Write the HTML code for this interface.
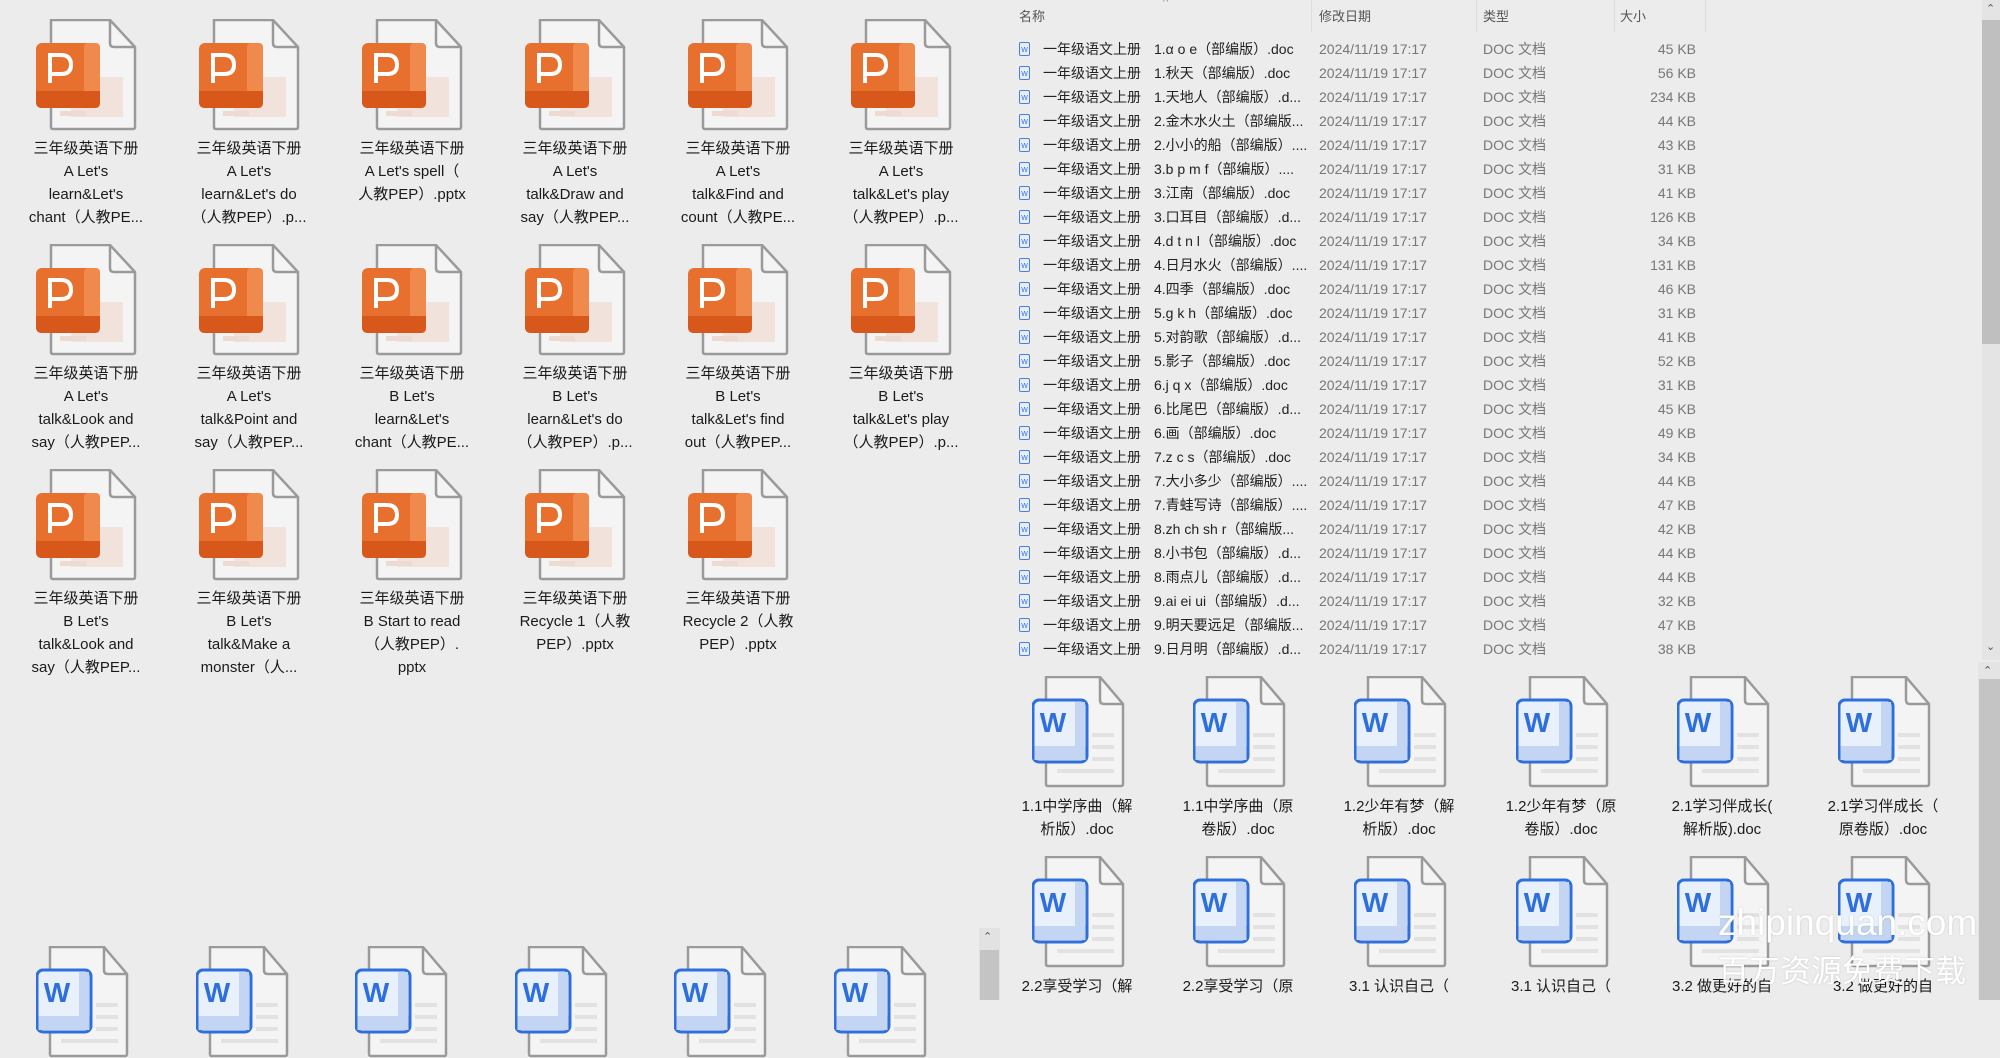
<!DOCTYPE html>
<html><head><meta charset="utf-8">
<style>
*{margin:0;padding:0;box-sizing:border-box}
body{width:2000px;height:1000px;overflow:hidden;background:#ececec;position:relative;font-family:"Liberation Sans","Noto Sans CJK SC",sans-serif;color:#1a1a1a}
.ic{position:absolute;width:110px;height:112px}
.t{position:absolute;width:150px;text-align:center;font-size:15px;line-height:23px;color:#1a1a1a;white-space:nowrap}
.hd{position:absolute;top:6px;font-size:13px;color:#555}
.sep{position:absolute;top:0;width:1px;height:32px;background:#dcdcdc}
.r{position:absolute;left:1000px;width:980px;height:24px;font-size:14px;line-height:24px}
.r span{position:absolute;white-space:nowrap}
.r .a{left:43px;color:#222}.r .b{left:154px;color:#222}.r .c{left:319px;color:#777}.r .d{left:483px;color:#777}.r .e{right:284px;color:#777}
.r svg{position:absolute;left:19px;top:5px}
.wm{position:absolute;color:#fff;white-space:nowrap;text-shadow:0 0 2px rgba(0,0,0,.15)}
</style></head><body>
<svg width="0" height="0" style="position:absolute">
<defs>
<symbol id="ppt" viewBox="0 0 110 112">
<path d="M15 1 H74 L99 28 V108 Q99 110 97 110 H17 Q15 110 15 108 Z" fill="#f4f4f4" stroke="#9a9a9a" stroke-width="2.5"/>
<path d="M74 1 V24 Q74 28 78 28 H99" fill="none" stroke="#9a9a9a" stroke-width="2.5"/>
<rect x="35" y="58" width="52" height="40" fill="#f1e2dc"/>
<rect x="24" y="92" width="26" height="5" fill="#ecdad3"/>
<rect x="0" y="24" width="64" height="65" rx="6" fill="#e8702f"/>
<rect x="48" y="24" width="16" height="65" rx="4" fill="#f08a4c"/>
<path d="M0 72 H64 V83 Q64 89 58 89 H6 Q0 89 0 83 Z" fill="#d8581b"/>
<path d="M14 64 V36 H25 Q35 36 35 46 Q35 55 25 55 H14" fill="none" stroke="#fff" stroke-width="4"/>
</symbol>
<symbol id="doc" viewBox="0 0 110 112">
<path d="M14 1 H68 L91 28 V108 Q91 110 89 110 H16 Q14 110 14 108 Z" fill="#f4f4f4" stroke="#9a9a9a" stroke-width="2.5"/>
<path d="M68 1 V24 Q68 28 72 28 H91" fill="none" stroke="#9a9a9a" stroke-width="2.5"/>
<rect x="60" y="57" width="22" height="4" fill="#e2e2e2"/>
<rect x="60" y="69" width="22" height="4" fill="#e2e2e2"/>
<rect x="60" y="81" width="22" height="4" fill="#e2e2e2"/>
<rect x="25" y="93" width="57" height="4" fill="#e2e2e2"/>
<rect x="1" y="24" width="54" height="62" rx="6" fill="#e8f0fb" stroke="#2f6fdc" stroke-width="3"/>
<rect x="43" y="26" width="10" height="58" fill="#c3d5f2"/>
<rect x="2.5" y="70" width="51" height="14" fill="#c3d5f2"/>
<text x="21" y="56" text-anchor="middle" font-family="Liberation Sans" font-weight="bold" font-size="28" fill="#2f6fdc">W</text>
</symbol>
<symbol id="sm" viewBox="0 0 11 14">
<rect x="0.5" y="0.5" width="10" height="13" rx="1.5" fill="#e6eefb" stroke="#4a7fd6"/>
<text x="5.5" y="10" text-anchor="middle" font-size="7" font-family="Liberation Sans" fill="#2f6fdc">W</text>
</symbol>
</defs></svg>

<!-- LEFT PPT GRID -->
<svg class="ic" style="left:36px;top:19px"><use href="#ppt"/></svg>
<svg class="ic" style="left:199px;top:19px"><use href="#ppt"/></svg>
<svg class="ic" style="left:362px;top:19px"><use href="#ppt"/></svg>
<svg class="ic" style="left:525px;top:19px"><use href="#ppt"/></svg>
<svg class="ic" style="left:688px;top:19px"><use href="#ppt"/></svg>
<svg class="ic" style="left:851px;top:19px"><use href="#ppt"/></svg>
<div class="t" style="left:11px;top:137px">三年级英语下册<br>A Let's<br>learn&amp;Let's<br>chant（人教PE...</div>
<div class="t" style="left:174px;top:137px">三年级英语下册<br>A Let's<br>learn&amp;Let's do<br>（人教PEP）.p...</div>
<div class="t" style="left:337px;top:137px">三年级英语下册<br>A Let's spell（<br>人教PEP）.pptx</div>
<div class="t" style="left:500px;top:137px">三年级英语下册<br>A Let's<br>talk&amp;Draw and<br>say（人教PEP...</div>
<div class="t" style="left:663px;top:137px">三年级英语下册<br>A Let's<br>talk&amp;Find and<br>count（人教PE...</div>
<div class="t" style="left:826px;top:137px">三年级英语下册<br>A Let's<br>talk&amp;Let's play<br>（人教PEP）.p...</div>

<svg class="ic" style="left:36px;top:244px"><use href="#ppt"/></svg>
<svg class="ic" style="left:199px;top:244px"><use href="#ppt"/></svg>
<svg class="ic" style="left:362px;top:244px"><use href="#ppt"/></svg>
<svg class="ic" style="left:525px;top:244px"><use href="#ppt"/></svg>
<svg class="ic" style="left:688px;top:244px"><use href="#ppt"/></svg>
<svg class="ic" style="left:851px;top:244px"><use href="#ppt"/></svg>
<div class="t" style="left:11px;top:362px">三年级英语下册<br>A Let's<br>talk&amp;Look and<br>say（人教PEP...</div>
<div class="t" style="left:174px;top:362px">三年级英语下册<br>A Let's<br>talk&amp;Point and<br>say（人教PEP...</div>
<div class="t" style="left:337px;top:362px">三年级英语下册<br>B Let's<br>learn&amp;Let's<br>chant（人教PE...</div>
<div class="t" style="left:500px;top:362px">三年级英语下册<br>B Let's<br>learn&amp;Let's do<br>（人教PEP）.p...</div>
<div class="t" style="left:663px;top:362px">三年级英语下册<br>B Let's<br>talk&amp;Let's find<br>out（人教PEP...</div>
<div class="t" style="left:826px;top:362px">三年级英语下册<br>B Let's<br>talk&amp;Let's play<br>（人教PEP）.p...</div>

<svg class="ic" style="left:36px;top:469px"><use href="#ppt"/></svg>
<svg class="ic" style="left:199px;top:469px"><use href="#ppt"/></svg>
<svg class="ic" style="left:362px;top:469px"><use href="#ppt"/></svg>
<svg class="ic" style="left:525px;top:469px"><use href="#ppt"/></svg>
<svg class="ic" style="left:688px;top:469px"><use href="#ppt"/></svg>
<div class="t" style="left:11px;top:587px">三年级英语下册<br>B Let's<br>talk&amp;Look and<br>say（人教PEP...</div>
<div class="t" style="left:174px;top:587px">三年级英语下册<br>B Let's<br>talk&amp;Make a<br>monster（人...</div>
<div class="t" style="left:337px;top:587px">三年级英语下册<br>B Start to read<br>（人教PEP）.<br>pptx</div>
<div class="t" style="left:500px;top:587px">三年级英语下册<br>Recycle 1（人教<br>PEP）.pptx</div>
<div class="t" style="left:663px;top:587px">三年级英语下册<br>Recycle 2（人教<br>PEP）.pptx</div>

<svg class="ic" style="left:36px;top:946px"><use href="#doc"/></svg>
<svg class="ic" style="left:196px;top:946px"><use href="#doc"/></svg>
<svg class="ic" style="left:355px;top:946px"><use href="#doc"/></svg>
<svg class="ic" style="left:515px;top:946px"><use href="#doc"/></svg>
<svg class="ic" style="left:674px;top:946px"><use href="#doc"/></svg>
<svg class="ic" style="left:834px;top:946px"><use href="#doc"/></svg>
<!-- left bottom scrollbar -->
<div style="position:absolute;left:979px;top:928px;width:21px;height:72px;background:#e2e2e2"></div>
<div style="position:absolute;left:983px;top:930px;font-size:11px;color:#555">&#8963;</div>
<div style="position:absolute;left:980px;top:950px;width:19px;height:50px;background:#c4c4c4"></div>

<!-- RIGHT LIST -->
<div class="hd" style="left:1019px">名称</div>
<div class="hd" style="left:1163px;top:-4px;font-size:11px;color:#888">^</div>
<div class="hd" style="left:1319px">修改日期</div>
<div class="hd" style="left:1483px">类型</div>
<div class="hd" style="left:1620px">大小</div>
<div class="sep" style="left:1311px"></div><div class="sep" style="left:1476px"></div><div class="sep" style="left:1614px"></div><div class="sep" style="left:1705px"></div>

<div class="r" style="top:37px"><svg width="11" height="14"><use href="#sm"/></svg><span class="a">一年级语文上册</span><span class="b">1.α o e（部编版）.doc</span><span class="c">2024/11/19 17:17</span><span class="d">DOC 文档</span><span class="e">45 KB</span></div>
<div class="r" style="top:61px"><svg width="11" height="14"><use href="#sm"/></svg><span class="a">一年级语文上册</span><span class="b">1.秋天（部编版）.doc</span><span class="c">2024/11/19 17:17</span><span class="d">DOC 文档</span><span class="e">56 KB</span></div>
<div class="r" style="top:85px"><svg width="11" height="14"><use href="#sm"/></svg><span class="a">一年级语文上册</span><span class="b">1.天地人（部编版）.d...</span><span class="c">2024/11/19 17:17</span><span class="d">DOC 文档</span><span class="e">234 KB</span></div>
<div class="r" style="top:109px"><svg width="11" height="14"><use href="#sm"/></svg><span class="a">一年级语文上册</span><span class="b">2.金木水火土（部编版...</span><span class="c">2024/11/19 17:17</span><span class="d">DOC 文档</span><span class="e">44 KB</span></div>
<div class="r" style="top:133px"><svg width="11" height="14"><use href="#sm"/></svg><span class="a">一年级语文上册</span><span class="b">2.小小的船（部编版）....</span><span class="c">2024/11/19 17:17</span><span class="d">DOC 文档</span><span class="e">43 KB</span></div>
<div class="r" style="top:157px"><svg width="11" height="14"><use href="#sm"/></svg><span class="a">一年级语文上册</span><span class="b">3.b p m f（部编版）....</span><span class="c">2024/11/19 17:17</span><span class="d">DOC 文档</span><span class="e">31 KB</span></div>
<div class="r" style="top:181px"><svg width="11" height="14"><use href="#sm"/></svg><span class="a">一年级语文上册</span><span class="b">3.江南（部编版）.doc</span><span class="c">2024/11/19 17:17</span><span class="d">DOC 文档</span><span class="e">41 KB</span></div>
<div class="r" style="top:205px"><svg width="11" height="14"><use href="#sm"/></svg><span class="a">一年级语文上册</span><span class="b">3.口耳目（部编版）.d...</span><span class="c">2024/11/19 17:17</span><span class="d">DOC 文档</span><span class="e">126 KB</span></div>
<div class="r" style="top:229px"><svg width="11" height="14"><use href="#sm"/></svg><span class="a">一年级语文上册</span><span class="b">4.d t n l（部编版）.doc</span><span class="c">2024/11/19 17:17</span><span class="d">DOC 文档</span><span class="e">34 KB</span></div>
<div class="r" style="top:253px"><svg width="11" height="14"><use href="#sm"/></svg><span class="a">一年级语文上册</span><span class="b">4.日月水火（部编版）....</span><span class="c">2024/11/19 17:17</span><span class="d">DOC 文档</span><span class="e">131 KB</span></div>
<div class="r" style="top:277px"><svg width="11" height="14"><use href="#sm"/></svg><span class="a">一年级语文上册</span><span class="b">4.四季（部编版）.doc</span><span class="c">2024/11/19 17:17</span><span class="d">DOC 文档</span><span class="e">46 KB</span></div>
<div class="r" style="top:301px"><svg width="11" height="14"><use href="#sm"/></svg><span class="a">一年级语文上册</span><span class="b">5.g k h（部编版）.doc</span><span class="c">2024/11/19 17:17</span><span class="d">DOC 文档</span><span class="e">31 KB</span></div>
<div class="r" style="top:325px"><svg width="11" height="14"><use href="#sm"/></svg><span class="a">一年级语文上册</span><span class="b">5.对韵歌（部编版）.d...</span><span class="c">2024/11/19 17:17</span><span class="d">DOC 文档</span><span class="e">41 KB</span></div>
<div class="r" style="top:349px"><svg width="11" height="14"><use href="#sm"/></svg><span class="a">一年级语文上册</span><span class="b">5.影子（部编版）.doc</span><span class="c">2024/11/19 17:17</span><span class="d">DOC 文档</span><span class="e">52 KB</span></div>
<div class="r" style="top:373px"><svg width="11" height="14"><use href="#sm"/></svg><span class="a">一年级语文上册</span><span class="b">6.j q x（部编版）.doc</span><span class="c">2024/11/19 17:17</span><span class="d">DOC 文档</span><span class="e">31 KB</span></div>
<div class="r" style="top:397px"><svg width="11" height="14"><use href="#sm"/></svg><span class="a">一年级语文上册</span><span class="b">6.比尾巴（部编版）.d...</span><span class="c">2024/11/19 17:17</span><span class="d">DOC 文档</span><span class="e">45 KB</span></div>
<div class="r" style="top:421px"><svg width="11" height="14"><use href="#sm"/></svg><span class="a">一年级语文上册</span><span class="b">6.画（部编版）.doc</span><span class="c">2024/11/19 17:17</span><span class="d">DOC 文档</span><span class="e">49 KB</span></div>
<div class="r" style="top:445px"><svg width="11" height="14"><use href="#sm"/></svg><span class="a">一年级语文上册</span><span class="b">7.z c s（部编版）.doc</span><span class="c">2024/11/19 17:17</span><span class="d">DOC 文档</span><span class="e">34 KB</span></div>
<div class="r" style="top:469px"><svg width="11" height="14"><use href="#sm"/></svg><span class="a">一年级语文上册</span><span class="b">7.大小多少（部编版）....</span><span class="c">2024/11/19 17:17</span><span class="d">DOC 文档</span><span class="e">44 KB</span></div>
<div class="r" style="top:493px"><svg width="11" height="14"><use href="#sm"/></svg><span class="a">一年级语文上册</span><span class="b">7.青蛙写诗（部编版）....</span><span class="c">2024/11/19 17:17</span><span class="d">DOC 文档</span><span class="e">47 KB</span></div>
<div class="r" style="top:517px"><svg width="11" height="14"><use href="#sm"/></svg><span class="a">一年级语文上册</span><span class="b">8.zh ch sh r（部编版...</span><span class="c">2024/11/19 17:17</span><span class="d">DOC 文档</span><span class="e">42 KB</span></div>
<div class="r" style="top:541px"><svg width="11" height="14"><use href="#sm"/></svg><span class="a">一年级语文上册</span><span class="b">8.小书包（部编版）.d...</span><span class="c">2024/11/19 17:17</span><span class="d">DOC 文档</span><span class="e">44 KB</span></div>
<div class="r" style="top:565px"><svg width="11" height="14"><use href="#sm"/></svg><span class="a">一年级语文上册</span><span class="b">8.雨点儿（部编版）.d...</span><span class="c">2024/11/19 17:17</span><span class="d">DOC 文档</span><span class="e">44 KB</span></div>
<div class="r" style="top:589px"><svg width="11" height="14"><use href="#sm"/></svg><span class="a">一年级语文上册</span><span class="b">9.ai ei ui（部编版）.d...</span><span class="c">2024/11/19 17:17</span><span class="d">DOC 文档</span><span class="e">32 KB</span></div>
<div class="r" style="top:613px"><svg width="11" height="14"><use href="#sm"/></svg><span class="a">一年级语文上册</span><span class="b">9.明天要远足（部编版...</span><span class="c">2024/11/19 17:17</span><span class="d">DOC 文档</span><span class="e">47 KB</span></div>
<div class="r" style="top:637px"><svg width="11" height="14"><use href="#sm"/></svg><span class="a">一年级语文上册</span><span class="b">9.日月明（部编版）.d...</span><span class="c">2024/11/19 17:17</span><span class="d">DOC 文档</span><span class="e">38 KB</span></div>

<!-- right scrollbars -->
<div style="position:absolute;left:1982px;top:0;width:18px;height:660px;background:#e4e4e4"></div>
<div style="position:absolute;left:1986px;top:2px;font-size:11px;color:#555">&#8963;</div>
<div style="position:absolute;left:1982px;top:20px;width:18px;height:324px;background:#bfbfbf"></div>
<div style="position:absolute;left:1986px;top:640px;font-size:11px;color:#555">&#8964;</div>
<div style="position:absolute;left:1978px;top:662px;width:22px;height:338px;background:#e4e4e4"></div>
<div style="position:absolute;left:1983px;top:664px;font-size:11px;color:#555">&#8963;</div>
<div style="position:absolute;left:1979px;top:679px;width:21px;height:321px;background:#c4c4c4"></div>

<!-- right doc grid -->
<svg class="ic" style="left:1032px;top:676px"><use href="#doc"/></svg>
<svg class="ic" style="left:1193px;top:676px"><use href="#doc"/></svg>
<svg class="ic" style="left:1354px;top:676px"><use href="#doc"/></svg>
<svg class="ic" style="left:1516px;top:676px"><use href="#doc"/></svg>
<svg class="ic" style="left:1677px;top:676px"><use href="#doc"/></svg>
<svg class="ic" style="left:1838px;top:676px"><use href="#doc"/></svg>
<div class="t" style="left:1002px;top:795px">1.1中学序曲（解<br>析版）.doc</div>
<div class="t" style="left:1163px;top:795px">1.1中学序曲（原<br>卷版）.doc</div>
<div class="t" style="left:1324px;top:795px">1.2少年有梦（解<br>析版）.doc</div>
<div class="t" style="left:1486px;top:795px">1.2少年有梦（原<br>卷版）.doc</div>
<div class="t" style="left:1647px;top:795px">2.1学习伴成长(<br>解析版).doc</div>
<div class="t" style="left:1808px;top:795px">2.1学习伴成长（<br>原卷版）.doc</div>
<svg class="ic" style="left:1032px;top:856px"><use href="#doc"/></svg>
<svg class="ic" style="left:1193px;top:856px"><use href="#doc"/></svg>
<svg class="ic" style="left:1354px;top:856px"><use href="#doc"/></svg>
<svg class="ic" style="left:1516px;top:856px"><use href="#doc"/></svg>
<svg class="ic" style="left:1677px;top:856px"><use href="#doc"/></svg>
<svg class="ic" style="left:1838px;top:856px"><use href="#doc"/></svg>
<div class="t" style="left:1002px;top:975px">2.2享受学习（解</div>
<div class="t" style="left:1163px;top:975px">2.2享受学习（原</div>
<div class="t" style="left:1324px;top:975px">3.1 认识自己（</div>
<div class="t" style="left:1486px;top:975px">3.1 认识自己（</div>
<div class="t" style="left:1647px;top:975px">3.2 做更好的自</div>
<div class="t" style="left:1808px;top:975px">3.2 做更好的自</div>

<div class="wm" style="left:1718px;top:902px;font-size:37px">zhipinquan.com</div>
<div class="wm" style="left:1718px;top:948px;font-size:31px;font-family:'Noto Sans CJK SC',sans-serif;line-height:42px">百万资源免费下载</div>
</body></html>
